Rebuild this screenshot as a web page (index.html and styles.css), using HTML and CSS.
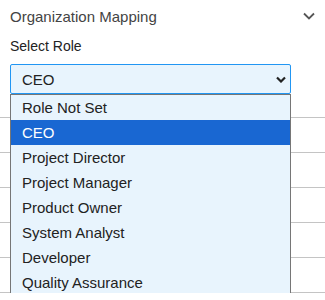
FILE: index.html
```html
<!DOCTYPE html>
<html lang="en">

<head>
    <meta charset="UTF-8">
    <meta name="viewport" content="width=device-width, initial-scale=1.0">
    <title>Organization Mapping</title>
    <link rel="stylesheet" href="styles.css">
</head>

<body>
    <div class="panel">
        <div class="panel-header">
            <span>Organization Mapping</span>
            <svg class="toggle" width="12" height="8" viewBox="0 0 12 8">
                <path d="M1 1.5 L6 6.5 L11 1.5" fill="none" stroke="#555" stroke-width="1.8" />
            </svg>
        </div>
        <div class="field-label">Select Role</div>
        <div class="select-wrap">
            <div class="select">
                <span>CEO</span>
                <svg width="10" height="7" viewBox="0 0 10 7">
                    <path d="M1 1.5 L5 5.5 L9 1.5" fill="none" stroke="#222" stroke-width="2.2" />
                </svg>
            </div>
            <ul class="options">
                <li>Role Not Set</li>
                <li class="selected">CEO</li>
                <li>Project Director</li>
                <li>Project Manager</li>
                <li>Product Owner</li>
                <li>System Analyst</li>
                <li>Developer</li>
                <li>Quality Assurance</li>
            </ul>
        </div>
    </div>

    <div class="rows">
        <div class="row"></div>
        <div class="row"></div>
        <div class="row"></div>
        <div class="row"></div>
        <div class="row"></div>
    </div>
</body>

</html>
```

FILE: styles.css
```css
body {
    font-family: "Liberation Sans", Arial, sans-serif;
    margin: 0;
    padding: 0;
    background-color: #fff;
    color: #222;
    overflow: hidden;
}

.panel {
    padding: 0 10px;
}

.panel-header {
    display: flex;
    justify-content: space-between;
    align-items: center;
    height: 32px;
    font-size: 15px;
    color: #444;
}

.field-label {
    margin-top: 6px;
    font-size: 14px;
    line-height: 16px;
    color: #222;
}

.select-wrap {
    position: relative;
    width: 281px;
    margin-top: 10px;
}

.select {
    display: flex;
    justify-content: space-between;
    align-items: center;
    height: 30px;
    box-sizing: border-box;
    padding: 0 4px 0 11px;
    border: 1px solid #2196f3;
    border-radius: 2px;
    background-color: #e8f4fd;
    font-size: 15px;
    color: #222;
}

.options {
    position: absolute;
    top: 30px;
    left: 0;
    width: 100%;
    box-sizing: border-box;
    margin: 0;
    padding: 0;
    list-style: none;
    border: 1px solid #767676;
    background-color: #e8f4fd;
    z-index: 10;
}

.options li {
    height: 25px;
    line-height: 25px;
    padding-left: 11px;
    font-size: 15px;
    color: #222;
}

.options li.selected {
    background-color: #1967d2;
    color: #fff;
}

.rows {
    margin-top: 23px;
    border-bottom: 1px solid #c4c4c4;
}

.row {
    height: 35px;
    box-sizing: border-box;
    border-top: 1px solid #c4c4c4;
}
```
